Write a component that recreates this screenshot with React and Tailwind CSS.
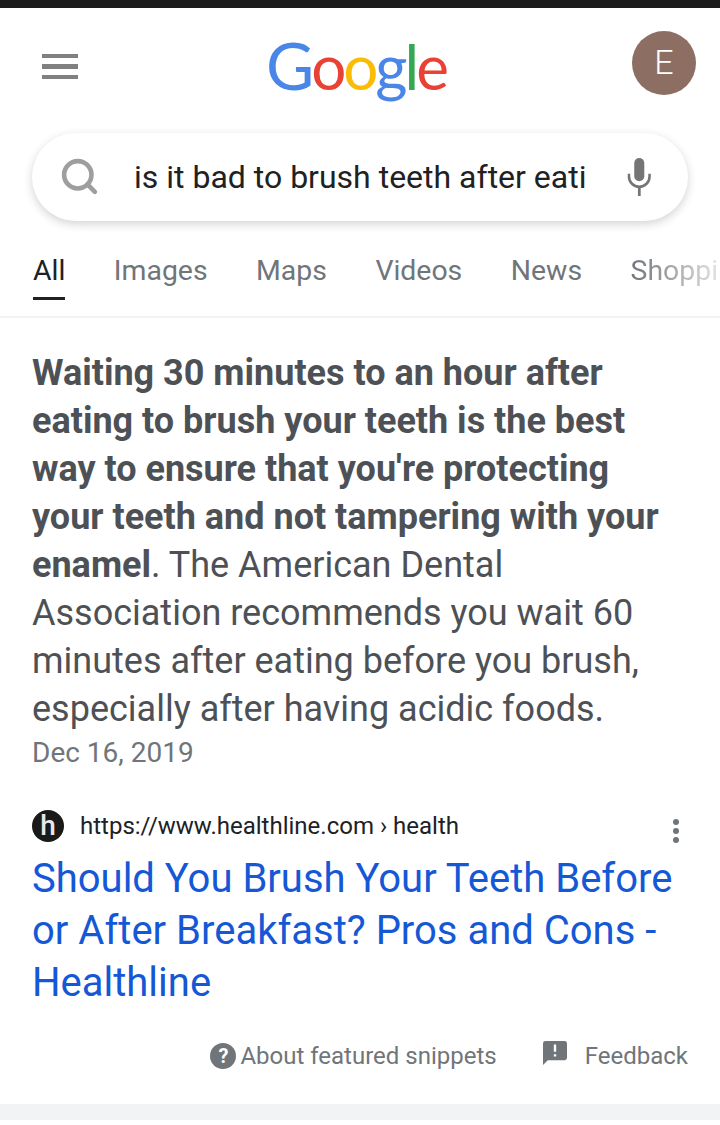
import { Search } from "lucide-react";

const tabs = ["Images", "Maps", "Videos", "News"];

function MicIcon() {
  return (
    <svg viewBox="0 0 24 36" className="w-[30px] h-[38px]" fill="none">
      <rect x="7.5" y="0" width="9.5" height="22" rx="4.75" fill="#757575" />
      <path d="M2.5 15v2.5a9.75 9.75 0 0 0 19.5 0V15" stroke="#757575" strokeWidth="2.4" />
      <rect x="11" y="27" width="2.6" height="9" fill="#757575" />
    </svg>
  );
}

function FeedbackIcon() {
  return (
    <svg viewBox="0 0 24 24" className="w-[24px] h-[24px]">
      <path d="M2.4 0h19.2A2.4 2.4 0 0 1 24 2.4v14.4a2.4 2.4 0 0 1-2.4 2.4H4.8L0 24V2.4A2.4 2.4 0 0 1 2.4 0zM10.8 3.6v7.2h2.4V3.6zM10.8 13.2v2.4h2.4v-2.4z" fill="#70757a" fillRule="evenodd" />
    </svg>
  );
}

export default function App() {
  return (
    <div className="w-[720px] h-[1125px] overflow-hidden bg-white font-['Roboto',sans-serif] flex flex-col">
      <div className="h-[8px] bg-[#1c1c1c]" />

      {/* header */}
      <div className="h-[105px] pl-[42px] pr-[24px] flex items-center justify-between">
        <div className="flex flex-col gap-[6px] mt-[12px]">
          <div className="w-[36px] h-[4px] bg-[#808080]" />
          <div className="w-[36px] h-[5px] bg-[#808080]" />
          <div className="w-[36px] h-[4px] bg-[#808080]" />
        </div>
        <div className="font-['Lato',sans-serif] text-[66px] leading-none tracking-[-3px] ml-[2px] mt-[8px] font-normal">
          <span className="text-[#4a86e8]">G</span>
          <span className="text-[#e94235] text-[62px]">o</span>
          <span className="text-[#fbbc05] text-[62px]">o</span>
          <span className="text-[#4a86e8] text-[62px]">g</span>
          <span className="text-[#34a853] text-[62px]">l</span>
          <span className="text-[#e94235] text-[62px]">e</span>
        </div>
        <div className="w-[64px] h-[64px] rounded-full bg-[#8d6e63] text-white text-[34px] font-light flex items-center justify-center mt-[4px]">
          E
        </div>
      </div>

      {/* search */}
      <div className="px-[32px] pt-[20px]">
        <div className="h-[88px] rounded-[44px] bg-white shadow-[0_3px_10px_rgba(32,33,36,0.2)] flex items-center pl-[27px] pr-[34px]">
          <Search className="w-[41px] h-[41px] text-[#9e9e9e] mr-[34px] -mt-[2px] shrink-0" strokeWidth={2.7} />
          <div className="w-[452px] overflow-hidden whitespace-nowrap text-[32px] text-[#212121]">
            is it bad to brush teeth after eating
          </div>
          <div className="ml-auto">
            <MicIcon />
          </div>
        </div>
      </div>

      {/* tabs */}
      <div className="h-[97px] border-b-2 border-[#f1f3f4] pl-[33px] flex gap-[48.5px] overflow-hidden whitespace-nowrap text-[28.4px] text-[#70757a]">
        <div className="flex flex-col pt-[33px]">
          <span className="leading-[34px] text-[#202124]">All</span>
          <div className="h-[3px] bg-[#202124] mt-[9px]" />
        </div>
        {tabs.map((t) => (
          <span key={t} className="pt-[33px] leading-[34px]">
            {t}
          </span>
        ))}
        <span className="pt-[33px] leading-[34px] bg-gradient-to-r from-[#70757a] to-[#e6e6e6] bg-clip-text text-transparent w-[90px] shrink-0 overflow-hidden">
          Shoppi
        </span>
      </div>

      {/* snippet */}
      <div className="px-[32px] pt-[31px]">
        <p className="text-[36px] leading-[48px] text-[#4d5156]">
          <b className="font-bold">
            Waiting 30 minutes to an hour after eating to brush your teeth is the best way to ensure that you're protecting your teeth and not tampering with your enamel
          </b>
          . The American Dental Association recommends you wait 60 minutes after eating before you brush, especially after having acidic foods.
        </p>
        <div className="text-[28px] leading-[40px] text-[#70757a]">Dec 16, 2019</div>

        <div className="flex items-center mt-[35px] h-[36px]">
          <div className="w-[32px] h-[32px] rounded-full bg-[#1a1a1a] flex items-center justify-center text-[28px] leading-none font-medium text-[#e8e8e8] mr-[16px]">
            h
          </div>
          <span className="text-[24px] text-[#202124]">https://www.healthline.com › health</span>
          <div className="ml-auto mr-[9px] mt-[10px] flex flex-col gap-[3px]">
            <div className="w-[6px] h-[6px] rounded-full bg-[#70757a]" />
            <div className="w-[6px] h-[6px] rounded-full bg-[#70757a]" />
            <div className="w-[6px] h-[6px] rounded-full bg-[#70757a]" />
          </div>
        </div>

        <div className="text-[40px] leading-[52px] text-[#1558d6] mt-[9px]">
          Should You Brush Your Teeth Before or After Breakfast? Pros and Cons - Healthline
        </div>

        <div className="flex items-center justify-end mt-[29px] text-[24px] text-[#70757a]">
          <div className="w-[26px] h-[26px] rounded-full bg-[#70757a] text-white text-[20px] font-bold flex items-center justify-center mr-[4px]">
            ?
          </div>
          <span>About featured snippets</span>
          <div className="ml-[46px] mr-[18px] -mt-[6px] flex">
            <FeedbackIcon />
          </div>
          <span>Feedback</span>
        </div>
      </div>

      <div className="h-[16px] bg-[#f1f3f4] mt-[30px]" />
    </div>
  );
}
